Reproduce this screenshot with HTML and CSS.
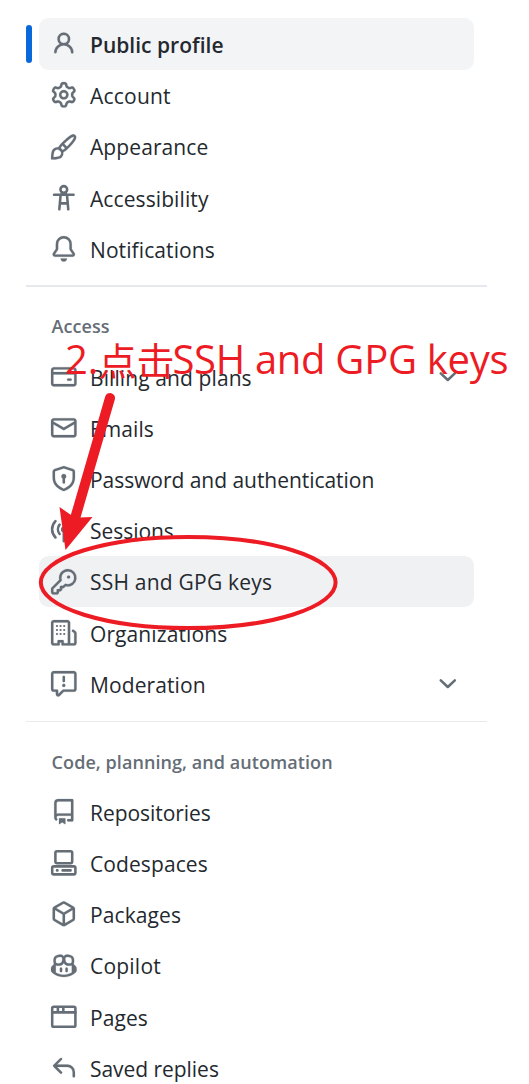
FILE: index.html
```html
<!DOCTYPE html>
<html lang="en">
<head>
<meta charset="utf-8">
<title>Settings</title>
<link rel="stylesheet" href="styles.css">
</head>
<body>
<nav class="settings-nav">
<ul class="nav-list">
<li class="nav-item current"><svg class="icon" viewBox="0 0 16 16"><path d="M10.561 8.073a6 6 0 0 1 3.432 5.142.75.75 0 1 1-1.498.07 4.5 4.5 0 0 0-8.99 0 .75.75 0 0 1-1.498-.07 6 6 0 0 1 3.431-5.142 3.999 3.999 0 1 1 5.123 0ZM10.5 5a2.5 2.5 0 1 0-5 0 2.5 2.5 0 0 0 5 0Z"/></svg><span class="label">Public profile</span></li>
<li class="nav-item"><svg class="icon" viewBox="0 0 16 16"><path d="M8 0a8.2 8.2 0 0 1 .701.031C9.444.095 9.99.645 10.16 1.29l.288 1.107c.018.066.079.158.212.224.231.114.454.243.668.386.123.082.233.09.299.071l1.103-.303c.644-.176 1.392.021 1.82.63.27.385.506.792.704 1.218.315.675.111 1.422-.364 1.891l-.814.806c-.049.048-.098.147-.088.294.016.257.016.515 0 .772-.01.147.038.246.088.294l.814.806c.475.469.679 1.216.364 1.891a7.977 7.977 0 0 1-.704 1.217c-.428.61-1.176.807-1.82.63l-1.102-.302c-.067-.019-.177-.011-.3.071a5.909 5.909 0 0 1-.668.386c-.133.066-.194.158-.211.224l-.29 1.106c-.168.646-.715 1.196-1.458 1.26a8.006 8.006 0 0 1-1.402 0c-.743-.064-1.289-.614-1.458-1.26l-.289-1.106c-.018-.066-.079-.158-.212-.224a5.738 5.738 0 0 1-.668-.386c-.123-.082-.233-.09-.299-.071l-1.103.303c-.644.176-1.392-.021-1.82-.63a8.12 8.12 0 0 1-.704-1.218c-.315-.675-.111-1.422.363-1.891l.815-.806c.05-.048.098-.147.088-.294a6.214 6.214 0 0 1 0-.772c.01-.147-.038-.246-.088-.294l-.815-.806C.635 6.045.431 5.298.746 4.623a7.92 7.92 0 0 1 .704-1.217c.428-.61 1.176-.807 1.82-.63l1.102.302c.067.019.177.011.3-.071.214-.143.437-.272.668-.386.133-.066.194-.158.211-.224l.29-1.106C6.009.645 6.556.095 7.299.03 7.53.01 7.764 0 8 0Zm-.571 1.525c-.036.003-.108.036-.137.146l-.289 1.105c-.147.561-.549.967-.998 1.189-.173.086-.34.183-.5.29-.417.278-.97.423-1.529.27l-1.103-.303c-.109-.03-.175.016-.195.045-.22.312-.412.644-.573.99-.014.031-.021.11.059.19l.815.806c.411.406.562.957.53 1.456a4.709 4.709 0 0 0 0 .582c.032.499-.119 1.05-.53 1.456l-.815.806c-.081.08-.073.159-.059.19.162.346.353.677.573.989.02.03.085.076.195.046l1.102-.303c.56-.153 1.113-.008 1.53.27.161.107.328.204.501.29.447.222.85.629.997 1.189l.289 1.105c.029.109.101.143.137.146a6.6 6.6 0 0 0 1.142 0c.036-.003.108-.036.137-.146l.289-1.105c.147-.561.549-.967.998-1.189.173-.086.34-.183.5-.29.417-.278.97-.423 1.529-.27l1.103.303c.109.029.175-.016.195-.045.22-.313.411-.644.573-.99.014-.031.021-.11-.059-.19l-.815-.806c-.411-.406-.562-.957-.53-1.456a4.709 4.709 0 0 0 0-.582c-.032-.499.119-1.05.53-1.456l.815-.806c.081-.08.073-.159.059-.19a6.464 6.464 0 0 0-.573-.989c-.02-.03-.085-.076-.195-.046l-1.102.303c-.56.153-1.113.008-1.53-.27a4.44 4.44 0 0 0-.501-.29c-.447-.222-.85-.629-.997-1.189l-.289-1.105c-.029-.11-.101-.143-.137-.146a6.6 6.6 0 0 0-1.142 0ZM11 8a3 3 0 1 1-6 0 3 3 0 0 1 6 0ZM9.5 8a1.5 1.5 0 1 0-3.001.001A1.5 1.5 0 0 0 9.5 8Z"/></svg><span class="label roomy">Account</span></li>
<li class="nav-item"><svg class="icon" viewBox="0 0 16 16"><path d="M11.134 1.535c.7-.509 1.416-.942 2.076-1.155.649-.21 1.463-.267 2.069.34.603.601.568 1.411.368 2.07-.202.668-.624 1.39-1.125 2.096-1.011 1.424-2.496 2.987-3.775 4.249-1.098 1.084-2.132 1.839-3.04 2.3a3.744 3.744 0 0 1-1.055 3.217c-.431.431-1.065.691-1.657.861-.614.177-1.294.287-1.914.357A21.151 21.151 0 0 1 .797 16H.743a.75.75 0 0 1-.743-.742v-.054a21.25 21.25 0 0 1 .13-2.284c.067-.647.187-1.287.358-1.914.17-.591.43-1.226.86-1.657a3.746 3.746 0 0 1 3.227-1.054c.466-.893 1.225-1.907 2.314-2.982 1.271-1.255 2.833-2.75 4.245-3.777ZM1.62 13.089c-.051.464-.086.929-.104 1.395.466-.018.932-.053 1.396-.104a10.511 10.511 0 0 0 1.668-.309c.526-.151.856-.325 1.011-.48a2.25 2.25 0 1 0-3.182-3.182c-.155.155-.329.485-.48 1.01a10.515 10.515 0 0 0-.309 1.67Zm10.396-10.34c-1.224.89-2.605 2.189-3.822 3.384l1.718 1.718c1.21-1.205 2.51-2.597 3.387-3.833.47-.662.78-1.227.912-1.662.134-.444.032-.551.009-.575h-.001V1.78c-.014-.014-.113-.113-.548.027-.432.14-.995.462-1.655.942Zm-4.832 7.266-.001.001a9.859 9.859 0 0 0 1.63-1.142L7.155 7.216a9.7 9.7 0 0 0-1.161 1.607c.482.302.889.71 1.19 1.192Z"/></svg><span class="label">Appearance</span></li>
<li class="nav-item"><svg class="icon line" viewBox="0 0 16 16"><circle cx="8" cy="2.8" r="2.1"/><path d="M1.9 6.1H14.1M6 6.3L5.2 15.2M10 6.3L10.8 15.2M5.6 11.5H10.4M7 4.9L6.1 6.5M9 4.9L9.9 6.5"/></svg><span class="label">Accessibility</span></li>
<li class="nav-item"><svg class="icon" viewBox="0 0 16 16"><path d="M8 16a2 2 0 0 0 1.985-1.75c.017-.137-.097-.25-.235-.25h-3.5c-.138 0-.252.113-.235.25A2 2 0 0 0 8 16ZM3 5a5 5 0 0 1 10 0v2.947c0 .05.015.098.042.139l1.703 2.555A1.519 1.519 0 0 1 13.482 13H2.518a1.516 1.516 0 0 1-1.263-2.36l1.703-2.554A.255.255 0 0 0 3 7.947Zm5-3.5A3.5 3.5 0 0 0 4.5 5v2.947c0 .346-.102.683-.294.97l-1.703 2.556a.017.017 0 0 0-.003.01l.001.006c0 .002.002.004.004.006l.006.004.007.001h10.964l.007-.001.006-.004.004-.006.001-.007a.017.017 0 0 0-.003-.01l-1.703-2.554a1.745 1.745 0 0 1-.294-.97V5A3.5 3.5 0 0 0 8 1.5Z"/></svg><span class="label">Notifications</span></li>
</ul>
<h2 class="group-title thick">Access</h2>
<ul class="nav-list">
<li class="nav-item"><svg class="icon" viewBox="0 0 16 16"><path d="M10.75 9a.75.75 0 0 0 0 1.5h1.5a.75.75 0 0 0 0-1.5h-1.5ZM0 3.75C0 2.784.784 2 1.75 2h12.5c.966 0 1.75.784 1.75 1.75v8.5A1.75 1.75 0 0 1 14.25 14H1.75A1.75 1.75 0 0 1 0 12.25ZM14.5 6.5h-13v5.75c0 .138.112.25.25.25h12.5a.25.25 0 0 0 .25-.25Zm0-2.75a.25.25 0 0 0-.25-.25H1.75a.25.25 0 0 0-.25.25V5h13Z"/></svg><span class="label">Billing and plans</span><svg class="icon line chevron" viewBox="0 0 16 16"><path d="M3.6 5.9L8 10L12.4 5.9"/></svg></li>
<li class="nav-item"><svg class="icon" viewBox="0 0 16 16"><path d="M1.75 2h12.5c.966 0 1.75.784 1.75 1.75v8.5A1.75 1.75 0 0 1 14.25 14H1.75A1.75 1.75 0 0 1 0 12.25v-8.5C0 2.784.784 2 1.75 2ZM1.5 12.251c0 .138.112.25.25.25h12.5a.25.25 0 0 0 .25-.25V5.809L8.38 9.397a.75.75 0 0 1-.76 0L1.5 5.809v6.442Zm13-8.181v-.32a.25.25 0 0 0-.25-.25H1.75a.25.25 0 0 0-.25.25v.32L8 7.88Z"/></svg><span class="label">Emails</span></li>
<li class="nav-item"><svg class="icon" viewBox="0 0 16 16"><path d="m8.533.133 5.25 1.68A1.75 1.75 0 0 1 15 3.48V7c0 1.566-.32 3.182-1.303 4.682-.983 1.498-2.585 2.813-5.032 3.855a1.697 1.697 0 0 1-1.33 0c-2.447-1.042-4.049-2.357-5.032-3.855C1.32 10.182 1 8.566 1 7V3.48a1.75 1.75 0 0 1 1.217-1.667l5.25-1.68a1.748 1.748 0 0 1 1.066 0Zm-.61 1.429.001.001-5.25 1.68a.251.251 0 0 0-.174.237V7c0 1.36.275 2.666 1.057 3.859.784 1.194 2.121 2.342 4.366 3.298a.196.196 0 0 0 .154 0c2.245-.957 3.582-2.103 4.366-3.297C13.225 9.666 13.5 8.358 13.5 7V3.48a.25.25 0 0 0-.174-.238l-5.25-1.68a.25.25 0 0 0-.153 0ZM9.5 6.5c0 .536-.286 1.032-.75 1.3v2.45a.75.75 0 0 1-1.5 0V7.8A1.5 1.5 0 1 1 9.5 6.5Z"/></svg><span class="label tight">Password and authentication</span></li>
<li class="nav-item"><svg class="icon line" viewBox="0 0 16 16"><path d="M2.8 2.6A7.2 7.2 0 0 0 2.8 12.8M5.4 4.8A4.5 4.5 0 0 0 5.4 10.6M13.2 2.6A7.2 7.2 0 0 1 13.2 12.8M10.6 4.8A4.5 4.5 0 0 1 10.6 10.6M8 9V15.2"/><circle cx="8" cy="7.8" r="1"/></svg><span class="label tight">Sessions</span></li>
<li class="nav-item hovered"><svg class="icon" viewBox="0 0 16 16"><path d="M10.5 0a5.499 5.499 0 1 1-1.288 10.848l-.932.932a.749.749 0 0 1-.53.22H7v.75a.749.749 0 0 1-.22.53l-.5.5a.749.749 0 0 1-.53.22H5v.75a.749.749 0 0 1-.22.53l-.5.5a.749.749 0 0 1-.53.22h-2A1.75 1.75 0 0 1 0 14.25v-2c0-.199.079-.389.22-.53l4.932-4.932A5.5 5.5 0 0 1 10.5 0Zm-4 5.5c-.001.431.069.86.205 1.269a.75.75 0 0 1-.181.768L1.5 12.56v1.69c0 .138.112.25.25.25h1.69l.06-.06v-1.19a.75.75 0 0 1 .75-.75h1.19l.06-.06v-1.19a.75.75 0 0 1 .75-.75h1.19l1.023-1.025a.75.75 0 0 1 .768-.18A4 4 0 1 0 6.5 5.5ZM11 6a1 1 0 1 1 0-2 1 1 0 0 1 0 2Z"/></svg><span class="label roomy">SSH and GPG keys</span></li>
<li class="nav-item"><svg class="icon" viewBox="0 0 16 16"><path d="M1.75 16A1.75 1.75 0 0 1 0 14.25V1.75C0 .784.784 0 1.75 0h8.5C11.216 0 12 .784 12 1.75v12.5c0 .085-.006.168-.018.25h2.268a.25.25 0 0 0 .25-.25V8.285a.25.25 0 0 0-.111-.208l-1.055-.703a.749.749 0 1 1 .832-1.248l1.055.703c.487.325.779.871.779 1.456v5.965A1.75 1.75 0 0 1 14.25 16h-3.5a.766.766 0 0 1-.197-.026c-.099.017-.2.026-.303.026h-3a.75.75 0 0 1-.75-.75V14h-1v1.25a.75.75 0 0 1-.75.75Zm-.25-1.75c0 .138.112.25.25.25H4v-1.25a.75.75 0 0 1 .75-.75h2.5a.75.75 0 0 1 .75.75v1.25h2.25a.25.25 0 0 0 .25-.25V1.75a.25.25 0 0 0-.25-.25h-8.5a.25.25 0 0 0-.25.25Z"/><path class="dots" d="M3.75 3.75h0M6 3.75h0M8.25 3.75h0M3.75 6.25h0M6 6.25h0M8.25 6.25h0M3.75 8.75h0M6 8.75h0M8.25 8.75h0"/></svg><span class="label">Organizations</span></li>
<li class="nav-item"><svg class="icon" viewBox="0 0 16 16"><path d="M0 1.75C0 .784.784 0 1.75 0h12.5C15.216 0 16 .784 16 1.75v9.5A1.75 1.75 0 0 1 14.25 13H8.06l-2.573 2.573A1.458 1.458 0 0 1 3 14.543V13H1.75A1.75 1.75 0 0 1 0 11.25Zm1.75-.25a.25.25 0 0 0-.25.25v9.5c0 .138.112.25.25.25h2a.75.75 0 0 1 .75.75v2.19l2.72-2.72a.749.749 0 0 1 .53-.22h6.5a.25.25 0 0 0 .25-.25v-9.5a.25.25 0 0 0-.25-.25Zm7 2.25v2.5a.75.75 0 0 1-1.5 0v-2.5a.75.75 0 0 1 1.5 0ZM9 9a1 1 0 1 1-2 0 1 1 0 0 1 2 0Z"/></svg><span class="label">Moderation</span><svg class="icon line chevron" viewBox="0 0 16 16"><path d="M3.6 5.9L8 10L12.4 5.9"/></svg></li>
</ul>
<h2 class="group-title">Code, planning, and automation</h2>
<ul class="nav-list">
<li class="nav-item"><svg class="icon" viewBox="0 0 16 16"><path d="M2 2.5A2.5 2.5 0 0 1 4.5 0h8.75a.75.75 0 0 1 .75.75v12.5a.75.75 0 0 1-.75.75h-2.5a.75.75 0 0 1 0-1.5h1.75v-2h-8a1 1 0 0 0-.714 1.7.75.75 0 1 1-1.072 1.05A2.495 2.495 0 0 1 2 11.5Zm10.5-1h-8a1 1 0 0 0-1 1v6.708A2.486 2.486 0 0 1 4.5 9h8ZM5 12.25a.25.25 0 0 1 .25-.25h3.5a.25.25 0 0 1 .25.25v3.25a.25.25 0 0 1-.4.2l-1.45-1.087a.249.249 0 0 0-.3 0L5.4 15.7a.25.25 0 0 1-.4-.2Z"/></svg><span class="label tight">Repositories</span></li>
<li class="nav-item"><svg class="icon line" viewBox="0 0 16 16"><rect x="2.75" y=".75" width="10.5" height="7.5" rx="1"/><rect x=".75" y="10.25" width="14.5" height="5" rx="1"/><path d="M3.75 12.75h.3M7.25 12.75h5"/></svg><span class="label">Codespaces</span></li>
<li class="nav-item"><svg class="icon" viewBox="0 0 16 16"><path d="m8.878.392 5.25 3.045c.54.314.872.89.872 1.514v6.098a1.75 1.75 0 0 1-.872 1.514l-5.25 3.045a1.75 1.75 0 0 1-1.756 0l-5.25-3.045A1.75 1.75 0 0 1 1 11.049V4.951c0-.624.332-1.201.872-1.514L7.122.392a1.75 1.75 0 0 1 1.756 0ZM7.875 1.69l-4.63 2.685L8 7.133l4.755-2.758-4.63-2.685a.248.248 0 0 0-.25 0ZM2.5 5.677v5.372c0 .09.047.171.125.216l4.625 2.683V8.432Zm6.25 8.271 4.625-2.683a.25.25 0 0 0 .125-.216V5.677L8.75 8.432Z"/></svg><span class="label">Packages</span></li>
<li class="nav-item"><svg class="icon" viewBox="0 0 16 16"><path d="M7.998 15.035c-4.562 0-7.873-2.914-7.998-3.749V9.338c.085-.628.677-1.686 1.588-2.065.013-.07.024-.143.036-.218.029-.183.06-.384.126-.612-.201-.508-.254-1.084-.254-1.656 0-.87.128-1.769.693-2.484.579-.733 1.494-1.124 2.724-1.261 1.206-.134 2.262.034 2.944.765.05.053.096.108.139.165.044-.057.094-.112.143-.165.682-.731 1.738-.899 2.944-.765 1.23.137 2.145.528 2.724 1.261.566.715.693 1.614.693 2.484 0 .572-.053 1.148-.254 1.656.066.228.098.429.126.612.012.076.024.148.037.218.924.385 1.522 1.471 1.591 2.095v1.872c0 .766-3.351 3.795-8.002 3.795Zm0-1.485c2.28 0 4.584-1.11 5.002-1.433V7.862l-.023-.116c-.49.21-1.075.291-1.727.291-1.146 0-2.059-.327-2.71-.991A3.222 3.222 0 0 1 8 6.303a3.24 3.24 0 0 1-.544.743c-.65.664-1.563.991-2.71.991-.652 0-1.236-.081-1.727-.291l-.023.116v4.255c.419.323 2.722 1.433 5.002 1.433ZM6.762 2.83c-.193-.206-.637-.413-1.682-.297-1.019.113-1.479.404-1.713.7-.247.312-.369.789-.369 1.554 0 .793.129 1.171.308 1.371.162.181.519.379 1.442.379.853 0 1.339-.235 1.638-.54.315-.322.527-.827.617-1.553.117-.935-.037-1.395-.241-1.614Zm4.155-.297c-1.044-.116-1.488.091-1.681.297-.204.219-.359.679-.242 1.614.091.726.303 1.231.618 1.553.299.305.784.54 1.638.54.922 0 1.28-.198 1.442-.379.179-.2.308-.578.308-1.371 0-.765-.123-1.242-.37-1.554-.233-.296-.693-.587-1.713-.7Z"/><path d="M6.25 9.037a.75.75 0 0 1 .75.75v1.501a.75.75 0 0 1-1.5 0V9.787a.75.75 0 0 1 .75-.75Zm4.25.75v1.501a.75.75 0 0 1-1.5 0V9.787a.75.75 0 0 1 1.5 0Z"/></svg><span class="label roomy">Copilot</span></li>
<li class="nav-item"><svg class="icon line" viewBox="0 0 16 16"><rect x=".75" y="1.75" width="14.5" height="12.5" rx="1"/><path d="M.75 5.25h14.5M4.3 2v3.25M7.7 2v3.25"/></svg><span class="label">Pages</span></li>
<li class="nav-item"><svg class="icon" viewBox="0 0 16 16"><path d="M6.78 1.97a.75.75 0 0 1 0 1.06L3.81 6h6.44A4.75 4.75 0 0 1 15 10.75v2.5a.75.75 0 0 1-1.5 0v-2.5a3.25 3.25 0 0 0-3.25-3.25H3.81l2.97 2.97a.749.749 0 0 1-.326 1.275.749.749 0 0 1-.734-.215L1.47 7.28a.75.75 0 0 1 0-1.06l4.25-4.25a.75.75 0 0 1 1.06 0Z"/></svg><span class="label tight">Saved replies</span></li>
</ul>
</nav>
<div class="annotation"><span>2.</span><span class="han">点击</span><span class="target">SSH and GPG keys</span></div>
<svg class="markup" viewBox="0 0 529 1084"><ellipse cx="188.2" cy="582.5" rx="147.4" ry="45.6"/><path class="shaft" d="M110 398L74 522"/><path class="head" d="M65.5 550L59.5 507L71 515L79.5 517.5L92.5 517Z"/></svg>
</body>
</html>
```
FILE: styles.css
```css
* { box-sizing: border-box; }
body {
  margin: 0;
  width: 529px;
  height: 1084px;
  overflow: hidden;
  position: relative;
  background: #fff;
  color: #24292f;
  font-family: "Open Sans", "Noto Sans", sans-serif;
}
.settings-nav { width: 487px; padding: 18.4px 0 0 26px; }
.nav-list { list-style: none; margin: 0; padding: 0 12.8px; }
.nav-item {
  display: flex;
  align-items: center;
  gap: 12.8px;
  height: 51.2px;
  padding: 0 13.2px 0 12.4px;
  border-radius: 9.6px;
  font-size: 21px;
  font-weight: 400;
  letter-spacing: .1px;
  line-height: 32px;
  white-space: nowrap;
}
.current { position: relative; background: #f3f4f6; font-weight: 600; letter-spacing: .02px; }
.current::before {
  content: "";
  position: absolute;
  left: -12.8px;
  top: 6.6px;
  width: 6.4px;
  height: 38.4px;
  border-radius: 3px;
  background: #0969da;
}
.hovered { background: #f0f1f3; }
.label { flex: 1; padding: 2px 0 0 .4px; }
.tight { letter-spacing: -.04px; }
.roomy { letter-spacing: .22px; }
.icon { width: 25.6px; height: 25.6px; flex: none; overflow: visible; fill: #656d76; fill-rule: evenodd; stroke: #656d76; stroke-width: .12; }
.line { fill: none; stroke-width: 1.6; stroke-linecap: round; stroke-linejoin: round; }
.dots { fill: none; stroke: #656d76; stroke-width: 1.4; stroke-linecap: round; }
.group-title {
  height: 76.8px;
  margin: 0;
  padding: 38.6px 0 0 25.6px;
  font-size: 18px;
  letter-spacing: .07px;
  line-height: 28px;
  font-weight: 600;
  color: #656d76;
  background: linear-gradient(#e8eaed, #e8eaed) 0 12px / 100% 1px no-repeat;
}
.thick { padding-top: 37.6px; background: linear-gradient(#e5e9ed, #e5e9ed) 0 11px / 100% 2px no-repeat; }
.annotation {
  position: absolute;
  left: 65px;
  top: 330px;
  display: flex;
  font-size: 40px;
  line-height: 58px;
  color: #ed1c24;
  white-space: nowrap;
}
.han { width: 74px; font-size: 38px; font-family: "Noto Sans CJK SC", sans-serif; }
.target { letter-spacing: -.3px; }
.markup { position: absolute; left: 0; top: 0; width: 529px; height: 1084px; fill: none; stroke: #ed1c24; stroke-width: 4; }
.shaft { stroke-width: 10; stroke-linecap: round; }
.head { fill: #ed1c24; stroke: none; }
```
